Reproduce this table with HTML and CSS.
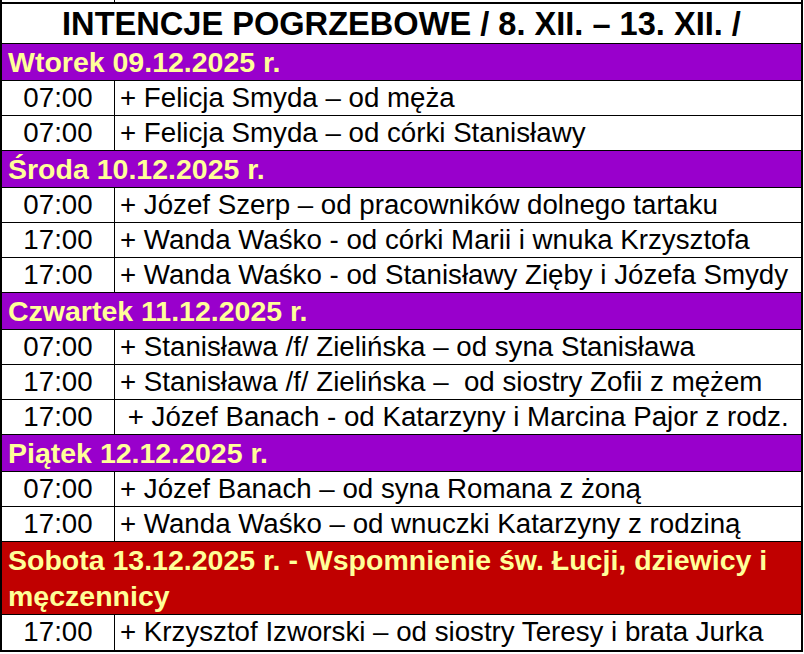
FILE: index.html
```html
<!DOCTYPE html>
<html lang="pl">
<head>
<meta charset="utf-8">
<title>Intencje pogrzebowe</title>
<link rel="stylesheet" href="styles.css">
</head>
<body>
<div class="sheet">
  <div class="row prev"><div class="time"></div><div class="text"></div></div>
  <div class="title">INTENCJE POGRZEBOWE / 8. XII. – 13. XII. /</div>

  <div class="day purple">Wtorek 09.12.2025 r.</div>
  <div class="row"><div class="time">07:00</div><div class="text">+ Felicja Smyda – od męża</div></div>
  <div class="row"><div class="time">07:00</div><div class="text">+ Felicja Smyda – od córki Stanisławy</div></div>

  <div class="day purple">Środa 10.12.2025 r.</div>
  <div class="row"><div class="time">07:00</div><div class="text">+ Józef Szerp – od pracowników dolnego tartaku</div></div>
  <div class="row"><div class="time">17:00</div><div class="text">+ Wanda Waśko - od córki Marii i wnuka Krzysztofa</div></div>
  <div class="row"><div class="time">17:00</div><div class="text">+ Wanda Waśko - od Stanisławy Zięby i Józefa Smydy</div></div>

  <div class="day purple">Czwartek 11.12.2025 r.</div>
  <div class="row"><div class="time">07:00</div><div class="text">+ Stanisława /f/ Zielińska – od syna Stanisława</div></div>
  <div class="row"><div class="time">17:00</div><div class="text">+ Stanisława /f/ Zielińska –&nbsp; od siostry Zofii z mężem</div></div>
  <div class="row"><div class="time">17:00</div><div class="text">&nbsp;+ Józef Banach - od Katarzyny i Marcina Pajor z rodz.</div></div>

  <div class="day purple">Piątek 12.12.2025 r.</div>
  <div class="row"><div class="time">07:00</div><div class="text">+ Józef Banach – od syna Romana z żoną</div></div>
  <div class="row"><div class="time">17:00</div><div class="text">+ Wanda Waśko – od wnuczki Katarzyny z rodziną</div></div>

  <div class="day red">Sobota 13.12.2025 r. - Wspomnienie św. Łucji, dziewicy i męczennicy</div>
  <div class="row last"><div class="time">17:00</div><div class="text">+ Krzysztof Izworski – od siostry Teresy i brata Jurka</div></div>
</div>
</body>
</html>
```

FILE: styles.css
```css
* { box-sizing: border-box; }
html, body { margin: 0; padding: 0; background: #fff; }
body {
  font-family: "Liberation Sans", Arial, sans-serif;
  color: #000;
  overflow: hidden;
}
.sheet {
  width: 803px;
  border-left: 2px solid #000;
  border-right: 2px solid #000;
  border-bottom: 2px solid #000;
}
.row {
  display: flex;
  height: 35px;
  border-top: 1px solid #000;
  font-size: 27.7px;
  line-height: 34px;
}
.row.prev { height: 2px; border-top: none; }
.row.last { height: 36px; }
.time {
  width: 113px;
  flex: none;
  border-right: 1px solid #000;
  text-align: center;
}
.text {
  flex: 1;
  padding-left: 5px;
  white-space: pre;
}
.title {
  height: 41px;
  border-top: 2px solid #000;
  font-size: 32.6px;
  font-weight: bold;
  text-align: center;
  line-height: 39px;
}
.day {
  border-top: 1px solid #000;
  min-height: 37px;
  font-size: 28.5px;
  font-weight: bold;
  line-height: 36px;
  padding-left: 6px;
  color: #ffff99;
}
.purple { background: #9900cc; }
.red { background: #c00000; }
```
